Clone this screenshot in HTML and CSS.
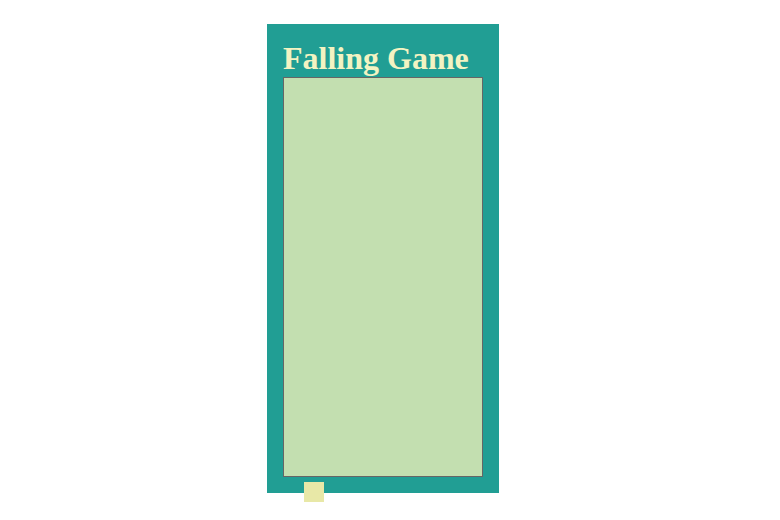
FILE: index.html
```html
<!DOCTYPE html>
<html>
<head>
<meta charset="utf-8">
<title>Falling Game</title>
<link rel="stylesheet" href="styles.css">
</head>
<body>
<div class="page">
  <div class="panel">
    <h1 class="title">Falling Game</h1>
    <div class="board">
      <div class="player"></div>
    </div>
  </div>
</div>
</body>
</html>
```
FILE: styles.css
```css
html, body {
  margin: 0;
  padding: 0;
  background: #ffffff;
}
.page {
  box-sizing: border-box;
  min-height: 520px;
  display: flex;
  justify-content: center;
  align-items: flex-start;
  padding-top: 24px;
  padding-right: 14px;
}
.panel {
  background: #219e94;
  padding: 16px;
  width: 200px;
}
.title {
  margin: 0;
  font-family: "Liberation Serif", "Times New Roman", serif;
  font-weight: bold;
  font-size: 32px;
  line-height: 37px;
  color: #f3f3c2;
  white-space: nowrap;
}
.board {
  position: relative;
  box-sizing: border-box;
  width: 200px;
  height: 400px;
  background: #c3dfb0;
  border: 1px solid #666666;
}
.player {
  position: absolute;
  left: 20px;
  top: 404px;
  width: 20px;
  height: 20px;
  background: #e8e8a7;
  z-index: 2;
}
```
